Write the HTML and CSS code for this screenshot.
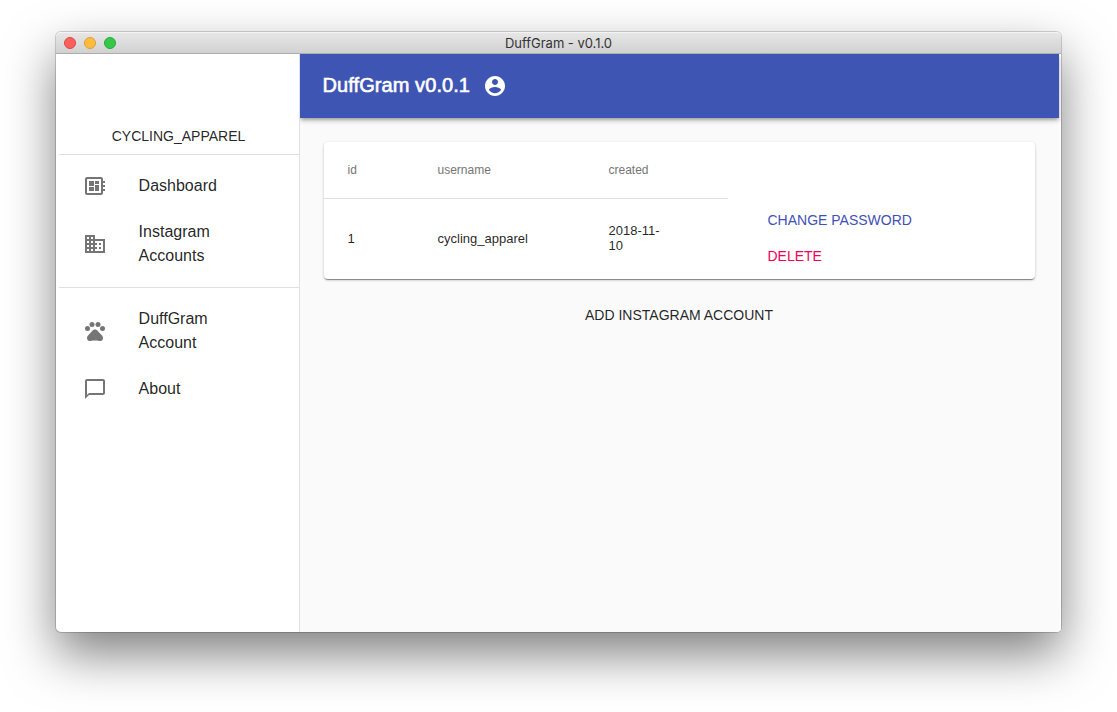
FILE: index.html
```html
<!DOCTYPE html>
<html lang="en">
<head>
<meta charset="utf-8">
<title>DuffGram - v0.1.0</title>
<link rel="stylesheet" href="styles.css">
</head>
<body>
<div class="window">
  <div class="titlebar">
    <div class="lights"><span class="light close"></span><span class="light minimize"></span><span class="light maximize"></span></div>
    <div class="window-title">DuffGram - v0.1.0</div>
  </div>
  <div class="content">
    <nav class="sidebar">
      <div class="account">CYCLING_APPAREL</div>
      <div class="group">
        <a class="item"><svg class="icon" viewBox="0 0 24 24"><path d="M22 9V7h-2V5c0-1.100-.9-2-2-2H4c-1.100 0-2 .9-2 2v14c0 1.100.9 2 2 2h14c1.100 0 2-.9 2-2v-2h2v-2h-2v-2h2v-2h-2V9h2zm-4 10H4V5h14v14zM6 13h5v4H6zm6-6h4v3h-4zM6 7h5v5H6zm6 4h4v6h-4z"/></svg><span>Dashboard</span></a>
        <a class="item"><svg class="icon" viewBox="0 0 24 24"><path d="M12 7V3H2v18h20V7H12zM6 19H4v-2h2v2zm0-4H4v-2h2v2zm0-4H4V9h2v2zm0-4H4V5h2v2zm4 12H8v-2h2v2zm0-4H8v-2h2v2zm0-4H8V9h2v2zm0-4H8V5h2v2zm10 12h-8v-2h2v-2h-2v-2h2v-2h-2V9h8v10zm-2-8h-2v2h2v-2zm0 4h-2v2h2v-2z"/></svg><span>Instagram<br>Accounts</span></a>
      </div>
      <div class="group">
        <a class="item"><svg class="icon" viewBox="0 0 24 24"><circle cx="4.500" cy="9.500" r="2.500"/><circle cx="9" cy="5.500" r="2.500"/><circle cx="15" cy="5.500" r="2.500"/><circle cx="19.500" cy="9.500" r="2.500"/><path d="M17.340 14.860c-.87-1.020-1.600-1.890-2.480-2.910-.46-.54-1.050-1.080-1.750-1.320-.11-.04-.22-.07-.33-.09-.25-.04-.52-.04-.78-.04s-.53 0-.79.050c-.11.020-.22.050-.33.090-.7.240-1.280.78-1.750 1.320-.87 1.020-1.600 1.890-2.480 2.910-1.310 1.310-2.920 2.760-2.620 4.790.29 1.020 1.020 2.030 2.330 2.320.73.150 3.060-.44 5.540-.44h.18c2.480 0 4.810.58 5.540.44 1.310-.29 2.040-1.310 2.330-2.320.31-2.040-1.300-3.490-2.610-4.800z"/></svg><span>DuffGram<br>Account</span></a>
        <a class="item"><svg class="icon" viewBox="0 0 24 24"><path d="M20 2H4c-1.100 0-2 .9-2 2v18l4-4h14c1.100 0 2-.9 2-2V4c0-1.100-.9-2-2-2zm0 14H6l-2 2V4h16v12z"/></svg><span>About</span></a>
      </div>
    </nav>
    <main class="main">
      <header class="appbar">
        <h1 class="app-title">DuffGram v0.0.1</h1>
        <svg class="icon profile" viewBox="0 0 24 24"><path d="M12 2C6.480 2 2 6.480 2 12s4.480 10 10 10 10-4.480 10-10S17.520 2 12 2zm0 3c1.660 0 3 1.340 3 3s-1.340 3-3 3-3-1.340-3-3 1.340-3 3-3zm0 14.200c-2.500 0-4.710-1.280-6-3.220.03-1.990 4-3.080 6-3.080 1.990 0 5.970 1.090 6 3.080-1.290 1.940-3.500 3.220-6 3.220z"/></svg>
      </header>
      <section class="card">
        <div class="row head"><span>id</span><span>username</span><span>created</span></div>
        <div class="row body">
          <span>1</span><span>cycling_apparel</span><span>2018-11-<br>10</span>
          <div class="actions"><button class="button primary">CHANGE PASSWORD</button><button class="button danger">DELETE</button></div>
        </div>
      </section>
      <button class="button add">ADD INSTAGRAM ACCOUNT</button>
    </main>
  </div>
</div>
</body>
</html>
```
FILE: styles.css
```css
* { box-sizing: border-box; }
body {
  margin: 0;
  padding: 32px 56px 80px;
  height: 712px;
  overflow: hidden;
  background: #fff;
  font-family: "Liberation Sans", Arial, sans-serif;
  color: rgba(0, 0, 0, 0.87);
}
.window {
  width: 1005px;
  height: 600px;
  border-radius: 5px;
  background: #fff;
  box-shadow: 0 0 0 1px rgba(0, 0, 0, 0.17), 0 22px 50px rgba(0, 0, 0, 0.5);
  display: flex;
  flex-direction: column;
}
.titlebar {
  height: 22px;
  flex: none;
  display: grid;
  grid-template-columns: 70px 1fr 70px;
  align-items: center;
  border-radius: 5px 5px 0 0;
  border-top: 1px solid #f4f4f4;
  border-bottom: 1px solid #adadad;
  background: linear-gradient(#e6e6e6, #d1d1d1);
}
.lights { display: flex; gap: 8px; padding-left: 8px; }
.light { width: 12px; height: 12px; border-radius: 50%; border: 1px solid; }
.close { background: #fc605c; border-color: #df4744; }
.minimize { background: #fdbc40; border-color: #de9f34; }
.maximize { background: #34c84a; border-color: #27aa35; }
.window-title {
  font: 13px/20px Inter, sans-serif;
  letter-spacing: -0.03px;
  text-align: center;
  color: #333;
}
.content { flex: 1; display: flex; min-height: 0; }
.sidebar {
  width: 244px;
  flex: none;
  padding-left: 3px;
  border-right: 1px solid #e0e0e0;
}
.account {
  height: 100px;
  padding: 74px 1px 0 0;
  font-size: 14px;
  line-height: 16px;
  text-align: center;
}
.group { border-top: 1px solid #e0e0e0; padding: 8px 0; }
.group:nth-child(2) { height: 133px; }
.item {
  display: flex;
  align-items: center;
  padding: 11px 24px;
  font-size: 16px;
  line-height: 24px;
}
.icon { width: 24px; height: 24px; flex: none; fill: #757575; margin-right: 31.6px; }
.main {
  flex: 1;
  display: flex;
  flex-direction: column;
  margin-right: 2px;
  background: #fafafa;
  box-shadow: 2px 0 0 #fcfcfc;
  border-bottom-right-radius: 4px;
  overflow: visible;
  clip-path: inset(0 -2px 0 0);
}
.appbar {
  height: 64px;
  display: flex;
  align-items: center;
  padding-left: 22.500px;
  background: #3f55b3;
  color: #fff;
  box-shadow: 0 2px 4px -1px rgba(0, 0, 0, 0.35), 0 3px 5px rgba(0, 0, 0, 0.14), 2px 0 0 #fff;
}
.app-title {
  width: 160.500px;
  margin: 0 0 2px;
  font-size: 20px;
  line-height: 24px;
  font-weight: 400;
  letter-spacing: 0.08px;
  -webkit-text-stroke: 0.6px #fff;
}
.profile { fill: #fff; margin: 0; }
.card {
  height: 137px;
  margin: 24px 24px 0;
  border-radius: 4px;
  background: #fff;
  box-shadow: 0 1px 3px rgba(0, 0, 0, 0.2), 0 1px 1px rgba(0, 0, 0, 0.14), 0 2px 1px -1px rgba(0, 0, 0, 0.3);
}
.row {
  display: grid;
  grid-template-columns: 90px 171px 159px 1fr;
  align-items: center;
  padding-left: 23.500px;
}
.head {
  width: 404px;
  height: 57px;
  border-bottom: 1px solid #e0e0e0;
  font-size: 12px;
  color: #757575;
}
.body { height: 78px; font-size: 13px; line-height: 15px; }
.actions { display: flex; flex-direction: column; align-items: flex-start; }
.button {
  height: 36px;
  padding: 0;
  border: 0;
  background: none;
  font: 14px/36px "Liberation Sans", Arial, sans-serif;
  color: inherit;
}
.primary { color: #3f51b5; }
.danger { color: #f50057; }
.add { align-self: center; margin: 18px 1px 0 0; }
```
